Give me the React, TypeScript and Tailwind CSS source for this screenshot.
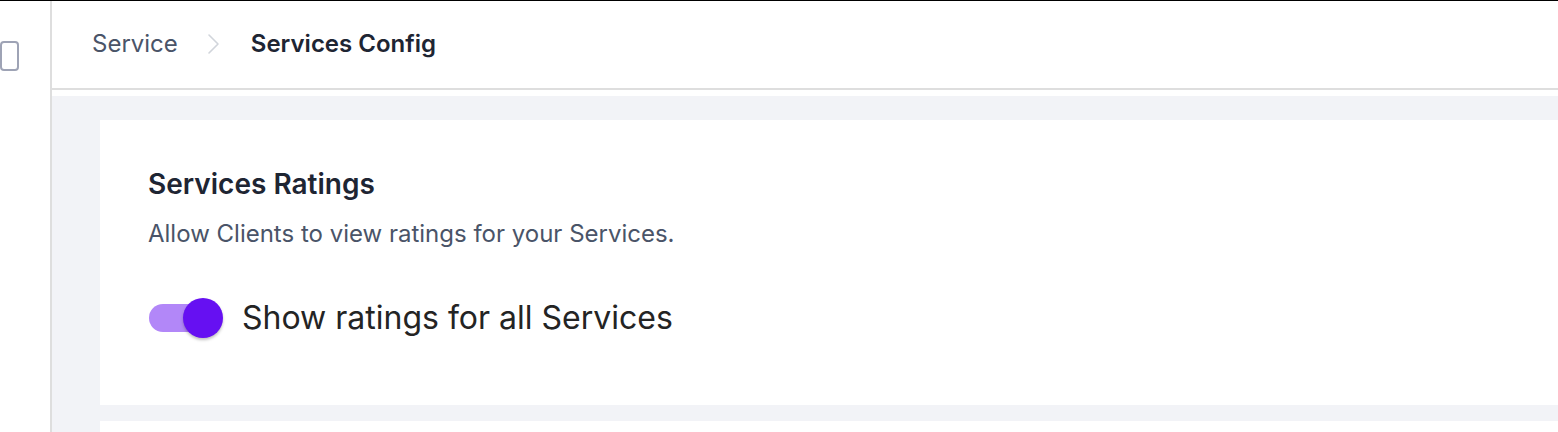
import React from "react";

export default function App() {
  return (
    <div className="w-[1558px] h-[432px] overflow-hidden bg-white flex flex-col" style={{ fontFamily: "Inter, 'Noto Sans', sans-serif" }}>
      <div className="h-[1px] bg-black shrink-0" />
      <div className="flex flex-1 min-h-0">
        <aside className="w-[52px] shrink-0 border-r-2 border-[#dedede] bg-white pt-[40px]">
          <div className="w-[19px] h-[30px] border-2 border-[#9ea3b5] rounded-[4px]" />
        </aside>
        <main className="flex-1 flex flex-col min-w-0">
          <header className="h-[89px] shrink-0 border-b-2 border-[#dedede] bg-white flex items-center pl-[40px] pb-[2px]">
            <span className="text-[24px] text-[#4a5468]">Service</span>
            <svg className="ml-[29px] mr-[30px]" width="14" height="22" viewBox="0 0 14 22" fill="none">
              <polyline points="2,2 11,11 2,20" stroke="#d1d5db" strokeWidth="1.6" strokeLinecap="round" strokeLinejoin="round" />
            </svg>
            <span className="text-[24px] font-semibold text-[#1e2533]">Services Config</span>
          </header>
          <div className="h-[6px] bg-white shrink-0" />
          <div className="flex-1 bg-[#f2f3f7] pt-[24px] pl-[48px] flex flex-col gap-[16px]">
            <section className="bg-white h-[285px] shrink-0 px-[48px] pt-[46px]">
              <h2 className="text-[28px] leading-[36px] font-semibold text-[#1e2533]">Services Ratings</h2>
              <p className="mt-[16px] text-[24px] leading-[32px] text-[#4a5468]">Allow Clients to view ratings for your Services.</p>
              <div className="mt-[48px] flex items-center">
                <div className="relative w-[74px] h-[40px] ml-[1px]">
                  <div className="absolute left-0 top-[6px] w-[68px] h-[28px] rounded-full bg-[#b287f8]" />
                  <div className="absolute left-[34px] top-0 w-[40px] h-[40px] rounded-full bg-[#6610f2] shadow-[0_2px_3px_rgba(0,0,0,0.25)]" />
                </div>
                <span className="ml-[19px] text-[32px] leading-[40px] text-[#242424]">Show ratings for all Services</span>
              </div>
            </section>
            <section className="bg-white h-[100px] shrink-0" />
          </div>
        </main>
      </div>
    </div>
  );
}
